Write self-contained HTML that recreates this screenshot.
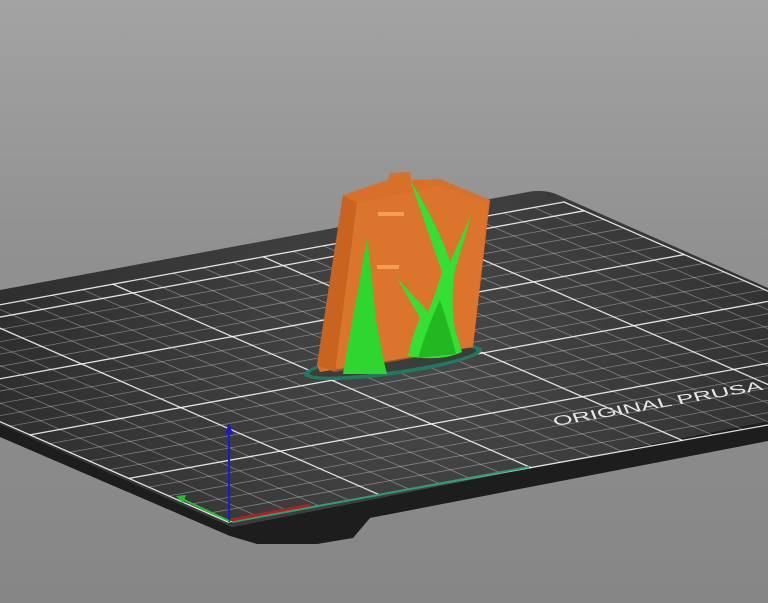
<!DOCTYPE html>
<html><head><meta charset="utf-8"><style>
html,body{margin:0;padding:0;width:768px;height:603px;overflow:hidden}
body{background:linear-gradient(#a3a3a3,#919191 40%,#868686)}
</style></head><body>
<svg id="s" width="768" height="603" viewBox="0 0 768 603" xmlns="http://www.w3.org/2000/svg" style="position:absolute;left:0;top:0">
<defs>
<radialGradient id="bg" cx="420" cy="360" r="460" gradientUnits="userSpaceOnUse">
<stop offset="0" stop-color="#484848"/><stop offset="1" stop-color="#2c2c2c"/></radialGradient>
</defs>
<!-- bed thickness -->
<polygon points="0,424 232,527 768,421 768,441 370,518 353,538 317,544 257,544 230,536 0,437" fill="#1d1d1d"/>
<!-- bed top -->
<path d="M0,290 L528,192 Q542,189 556,194 L768,288 L768,421 L232,527 L0,424 Z" fill="url(#bg)"/>
<g id="grid" stroke-linecap="round"></g>
<!-- axis line green along front -->
<line x1="232" y1="522" x2="529" y2="467" stroke="#2aa070" stroke-width="2"/>
<!-- object brim -->
<ellipse cx="393" cy="362" rx="90" ry="13" transform="rotate(-8 393 362)" fill="#1f7a60"/>
<ellipse cx="393" cy="362" rx="84" ry="9" transform="rotate(-8 393 362)" fill="#3a3d3c"/>
<!-- orange object -->
<polygon points="343,195 388,180 390,173 410,172 411,180 440,179 490,200 473,347 320,372 317,365" fill="#d8702a"/>
<polygon points="343,195 357,203 335,372 317,365" fill="#c86420"/>
<polygon points="357,203 440,186 488,202 473,347 335,372" fill="#de7a30" opacity="0.5"/>
<rect x="378" y="212" width="26" height="4" fill="#f0a050"/>
<rect x="377" y="265" width="22" height="4" fill="#f0a050"/>
<!-- green supports -->
<path d="M343,374 Q350,330 358,290 L367,237 Q372,280 376,320 Q382,355 387,374 Z" fill="#2fd62f"/>
<path d="M408,356 Q412,335 420,318 L397,278 L428,312 Q436,292 442,272 L410,180 Q438,225 450,262 L472,213 L455,270 Q450,300 455,330 L462,352 Q440,362 408,356 Z" fill="#33e033"/>
<path d="M418,358 Q428,325 440,300 Q450,330 456,354 Z" fill="#22b822"/>
<!-- axes -->
<line x1="229" y1="522" x2="229" y2="432" stroke="#1a1ad0" stroke-width="2"/>
<polygon points="225,434 233,434 229,423" fill="#1a1ad0"/>
<line x1="231" y1="520" x2="310" y2="505" stroke="#b02020" stroke-width="3"/>
<line x1="229" y1="521" x2="182" y2="499" stroke="#22c030" stroke-width="2"/>
<polygon points="176,496 186,495 183,503" fill="#22c030"/>
<text x="0" y="0" transform="matrix(0.985,-0.171,0.35,0.85,555,426)" font-family="Liberation Sans, sans-serif" font-size="15" fill="#e6e6e6" textLength="212" lengthAdjust="spacingAndGlyphs">ORIGINAL PRUSA</text>
</svg>
<script>
(function(){
var FL=[228,522],FR=[985,386],BR=[564,202],BL=[-188,339];
function m(u,v){
var x=(1-u)*(1-v)*FL[0]+u*(1-v)*FR[0]+u*v*BR[0]+(1-u)*v*BL[0];
var y=(1-u)*(1-v)*FL[1]+u*(1-v)*FR[1]+u*v*BR[1]+(1-u)*v*BL[1];
return [x,y];}
var G=document.getElementById('grid'),s='';
function ln(p,q,t){var o=t?0.85:0.35,sw=t?1.3:0.8;s+='<line x1="'+p[0].toFixed(1)+'" y1="'+p[1].toFixed(1)+'" x2="'+q[0].toFixed(1)+'" y2="'+q[1].toFixed(1)+'" stroke="#ffffff" stroke-opacity="'+o+'" stroke-width="'+sw+'"/>';}
for(var i=0;i<=25;i++){var u=i/25;ln(m(u,0),m(u,1),i%5==0||i==25);}
for(var j=0;j<=21;j++){var v=j/21;ln(m(0,v),m(1,v),j%5==0||j==21);}
G.innerHTML=s;
})();
</script>
</body></html>
